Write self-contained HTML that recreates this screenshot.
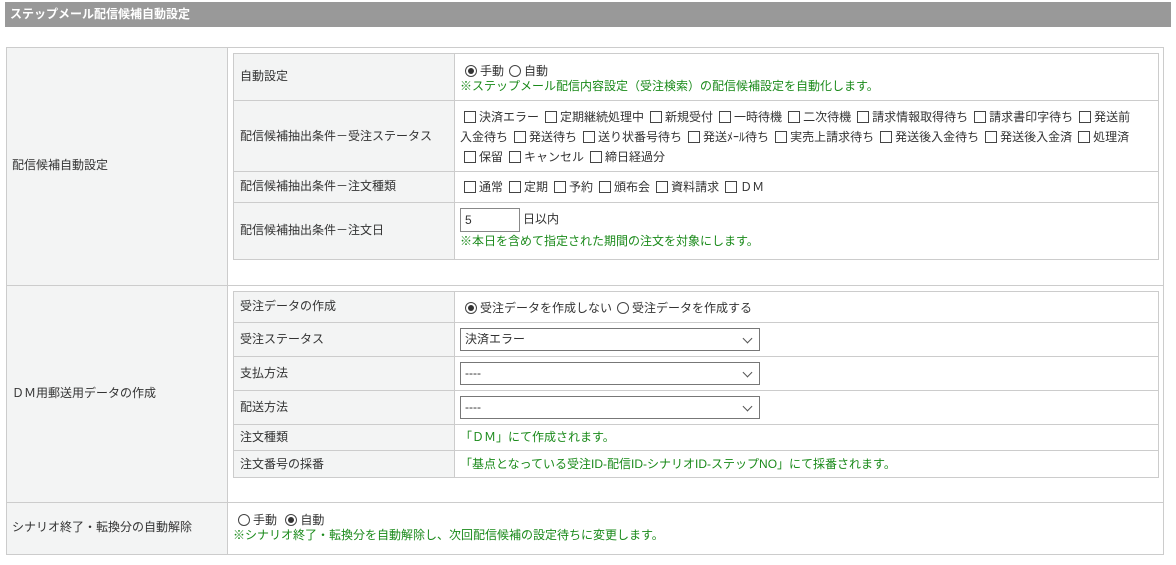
<!DOCTYPE html>
<html><head><meta charset="utf-8"><style>
*{margin:0;padding:0;box-sizing:border-box}
body{width:1176px;height:565px;background:#fff;font-family:"Liberation Sans","Noto Sans CJK JP",sans-serif;font-size:12px;color:#333;position:relative;overflow:hidden}
.a{position:absolute}
.b{position:absolute;border:1px solid #ccc}
.lab{background:#f3f4f4}
.hl{position:absolute;height:1px;background:#ccc}
.vl{position:absolute;width:1px;background:#ccc}
.t{position:absolute;white-space:nowrap;line-height:16px}
.g{color:#1a8a1a}
.cb{display:inline-block;width:12px;height:12px;border:1px solid #444;vertical-align:-2px;margin-right:3px;margin-left:6px;background:#fff}
.f{margin-left:1px}
.rd{display:inline-block;width:12px;height:12px;border:1px solid #444;border-radius:50%;vertical-align:-2px;margin-right:3px;margin-left:5px;position:relative;background:#fff}
.rd.on::after{content:"";position:absolute;left:2px;top:2px;width:6px;height:6px;border-radius:50%;background:#333}
.sel{position:absolute;left:460px;width:300px;height:23px;border:1px solid #777;background:#fff;padding:3px 4px;line-height:15px}
.sel::after{content:"";position:absolute;right:8px;top:6px;width:6px;height:6px;border-right:1px solid #555;border-bottom:1px solid #555;transform:rotate(45deg)}
</style></head><body>
<div class="a" style="left:5px;top:2px;width:1166px;height:25px;background:#999;color:#fff;font-weight:bold;font-size:12px;line-height:25px;padding-left:5px">ステップメール配信候補自動設定</div>

<div class="b" style="left:6px;top:47px;width:1158px;height:508px"></div>
<div class="a lab" style="left:7px;top:48px;width:220px;height:506px"></div>
<div class="vl" style="left:227px;top:47px;height:508px"></div>
<div class="hl" style="left:6px;top:285px;width:1158px"></div>
<div class="hl" style="left:6px;top:502px;width:1158px"></div>

<div class="b" style="left:233px;top:53px;width:926px;height:207px"></div>
<div class="a lab" style="left:234px;top:54px;width:220px;height:205px"></div>
<div class="vl" style="left:454px;top:53px;height:207px"></div>
<div class="hl" style="left:233px;top:100px;width:926px"></div>
<div class="hl" style="left:233px;top:171px;width:926px"></div>
<div class="hl" style="left:233px;top:202px;width:926px"></div>

<div class="b" style="left:233px;top:291px;width:926px;height:187px"></div>
<div class="a lab" style="left:234px;top:292px;width:220px;height:185px"></div>
<div class="vl" style="left:454px;top:291px;height:187px"></div>
<div class="hl" style="left:233px;top:322px;width:926px"></div>
<div class="hl" style="left:233px;top:356px;width:926px"></div>
<div class="hl" style="left:233px;top:390px;width:926px"></div>
<div class="hl" style="left:233px;top:424px;width:926px"></div>
<div class="hl" style="left:233px;top:450px;width:926px"></div>

<div class="t" style="left:12px;top:157px">配信候補自動設定</div>
<div class="t" style="left:12px;top:385px">ＤＭ用郵送用データの作成</div>
<div class="t" style="left:12px;top:519px">シナリオ終了・転換分の自動解除</div>

<div class="t" style="left:240px;top:68px">自動設定</div>
<div class="t" style="left:240px;top:128px">配信候補抽出条件－受注ステータス</div>
<div class="t" style="left:240px;top:178px">配信候補抽出条件－注文種類</div>
<div class="t" style="left:240px;top:222px">配信候補抽出条件－注文日</div>

<div class="t" style="left:460px;top:63px"><span class="rd on"></span>手動<span class="rd"></span>自動</div>
<div class="t g" style="left:460px;top:78px">※ステップメール配信内容設定（受注検索）の配信候補設定を自動化します。</div>

<div class="t" style="left:463px;top:109px"><span class="cb f"></span>決済エラー<span class="cb"></span>定期継続処理中<span class="cb"></span>新規受付<span class="cb"></span>一時待機<span class="cb"></span>二次待機<span class="cb"></span>請求情報取得待ち<span class="cb"></span>請求書印字待ち<span class="cb"></span>発送前</div>
<div class="t" style="left:460px;top:129px">入金待ち<span class="cb"></span>発送待ち<span class="cb"></span>送り状番号待ち<span class="cb"></span>発送ﾒｰﾙ待ち<span class="cb"></span>実売上請求待ち<span class="cb"></span>発送後入金待ち<span class="cb"></span>発送後入金済<span class="cb"></span>処理済</div>
<div class="t" style="left:463px;top:149px"><span class="cb f"></span>保留<span class="cb"></span>キャンセル<span class="cb"></span>締日経過分</div>

<div class="t" style="left:463px;top:179px"><span class="cb f"></span>通常<span class="cb"></span>定期<span class="cb"></span>予約<span class="cb"></span>頒布会<span class="cb"></span>資料請求<span class="cb"></span>ＤＭ</div>

<div class="a" style="left:460px;top:208px;width:60px;height:24px;border:1px solid #888;padding:3px 4px;line-height:16px">5</div>
<div class="t" style="left:523px;top:211px">日以内</div>
<div class="t g" style="left:460px;top:233px">※本日を含めて指定された期間の注文を対象にします。</div>

<div class="t" style="left:240px;top:298px">受注データの作成</div>
<div class="t" style="left:240px;top:331px">受注ステータス</div>
<div class="t" style="left:240px;top:365px">支払方法</div>
<div class="t" style="left:240px;top:399px">配送方法</div>
<div class="t" style="left:240px;top:429px">注文種類</div>
<div class="t" style="left:240px;top:456px">注文番号の採番</div>

<div class="t" style="left:460px;top:300px"><span class="rd on"></span>受注データを作成しない<span class="rd"></span>受注データを作成する</div>
<div class="sel" style="top:328px">決済エラー</div>
<div class="sel" style="top:362px">----</div>
<div class="sel" style="top:396px">----</div>
<div class="t g" style="left:460px;top:429px">「ＤＭ」にて作成されます。</div>
<div class="t g" style="left:460px;top:456px">「基点となっている受注ID-配信ID-シナリオID-ステップNO」にて採番されます。</div>

<div class="t" style="left:233px;top:512px"><span class="rd"></span>手動 <span class="rd on"></span>自動</div>
<div class="t g" style="left:233px;top:527px">※シナリオ終了・転換分を自動解除し、次回配信候補の設定待ちに変更します。</div>
</body></html>
